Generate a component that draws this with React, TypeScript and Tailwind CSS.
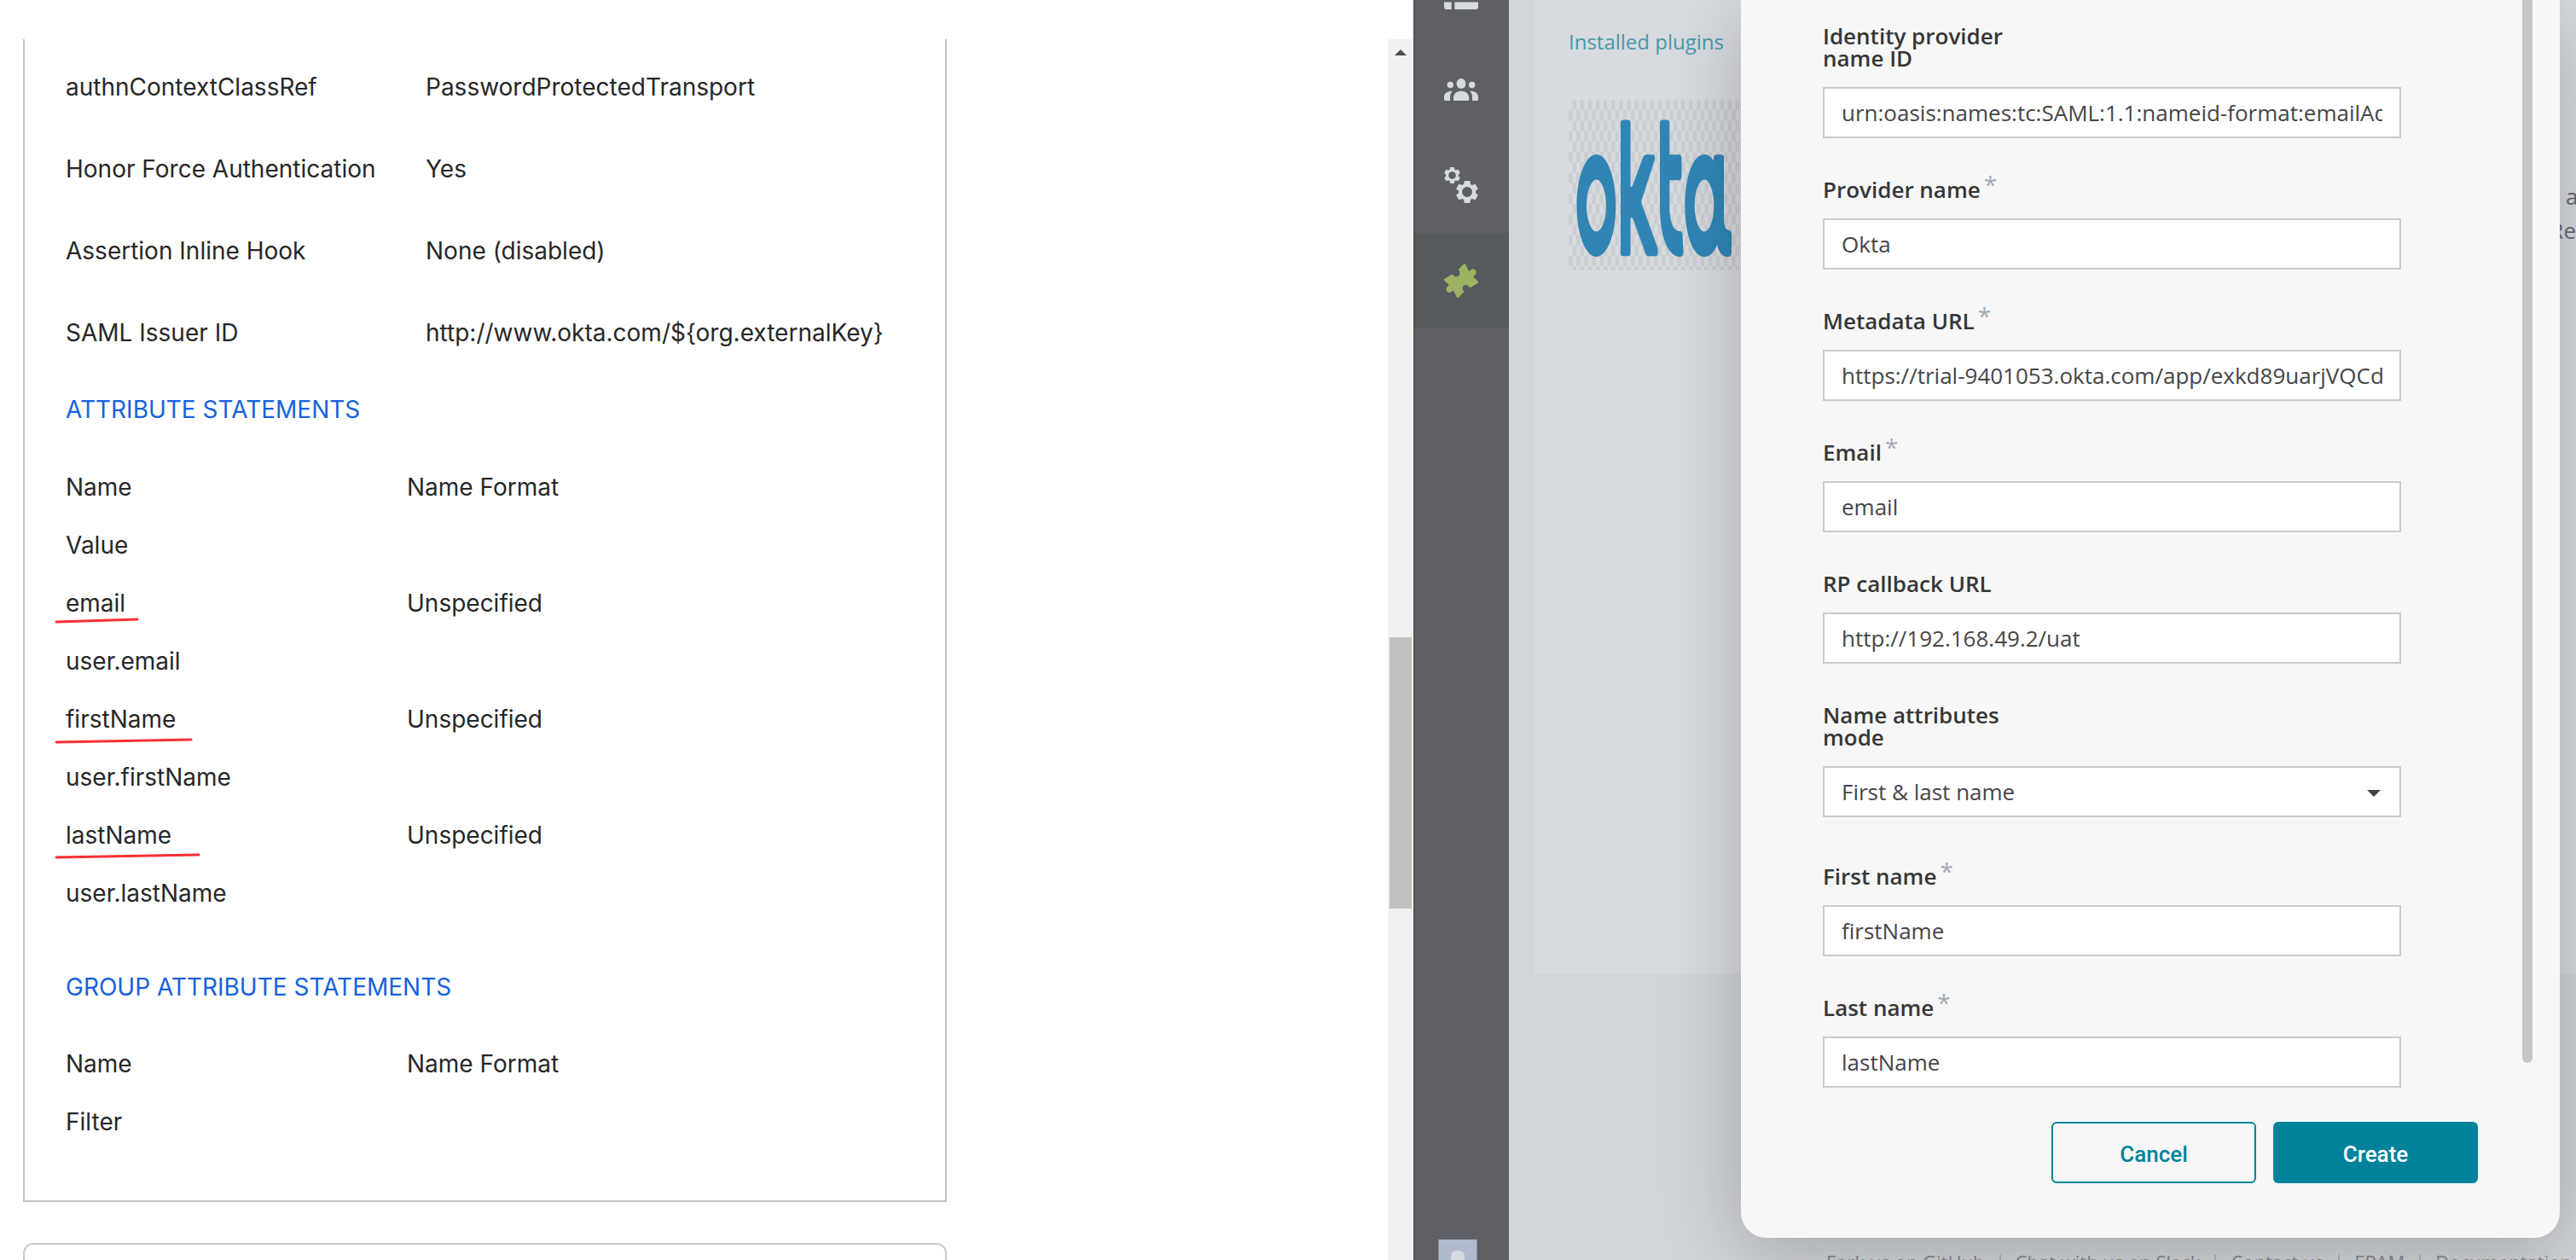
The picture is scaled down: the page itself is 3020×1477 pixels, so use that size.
import React from "react";

const pairs = [
  ["authnContextClassRef", "PasswordProtectedTransport"],
  ["Honor Force Authentication", "Yes"],
  ["Assertion Inline Hook", "None (disabled)"],
  ["SAML Issuer ID", "http://www.okta.com/${org.externalKey}"],
];

type Mark = { width: number; rise: number; top: string };

const attributes: { name: string; format: string; mark?: Mark }[] = [
  { name: "Name", format: "Name Format" },
  { name: "Value", format: "" },
  { name: "email", format: "Unspecified", mark: { width: 97, rise: 3, top: "top-[52px]" } },
  { name: "user.email", format: "" },
  { name: "firstName", format: "Unspecified", mark: { width: 160, rise: 3, top: "top-[57px]" } },
  { name: "user.firstName", format: "" },
  { name: "lastName", format: "Unspecified", mark: { width: 169, rise: 3, top: "top-[56px]" } },
  { name: "user.lastName", format: "" },
];

const groups = [
  { name: "Name", format: "Name Format" },
  { name: "Filter", format: "" },
];

function AttributeTable({ rows }: { rows: { name: string; format: string; mark?: Mark }[] }) {
  return (
    <table className="w-full table-fixed border-collapse text-left">
      <tbody>
        {rows.map((r) => (
          <tr key={r.name} className="h-[68px]">
            <td className="relative w-[400px] p-0">
              {r.name}
              {r.mark && (
                <svg
                  className={`absolute -left-3 overflow-visible ${r.mark.top}`}
                  width={r.mark.width}
                  height="6"
                  aria-hidden="true"
                >
                  <path
                    d={`M1 ${1 + r.mark.rise}L${r.mark.width - 1} 1`}
                    stroke="#fb2f35"
                    strokeWidth="3"
                    strokeLinecap="round"
                  />
                </svg>
              )}
            </td>
            <td className="p-0">{r.format}</td>
          </tr>
        ))}
      </tbody>
    </table>
  );
}

function SettingsPane() {
  return (
    <section className="flex min-w-0 flex-1 pt-[46px] text-[28px] leading-[34px] text-[#272727]">
      <div className="min-w-0 flex-1 pl-[27px]">
        <div className="max-w-[1083px] border-x-2 border-b-2 border-[#c1c1c8] px-12 pb-[58px]">
          <table className="w-full table-fixed border-collapse text-left">
            <tbody>
              {pairs.map(([k, v]) => (
                <tr key={k} className="h-24">
                  <td className="w-[422px] p-0 pt-4">{k}</td>
                  <td className="p-0 pt-4">{v}</td>
                </tr>
              ))}
            </tbody>
          </table>
          <h2 className="pt-[33px] pb-10 text-[#1662dd]">ATTRIBUTE STATEMENTS</h2>
          <AttributeTable rows={attributes} />
          <h2 className="pt-[59px] pb-[39px] text-[#1662dd]">GROUP ATTRIBUTE STATEMENTS</h2>
          <AttributeTable rows={groups} />
        </div>
        <div className="mt-12 h-10 max-w-[1083px] rounded-t-xl border-x-2 border-t-2 border-[#cbcbcb]" />
      </div>
      <div className="flex w-[30px] shrink-0 flex-col bg-[#f1f1f1] px-0.5 pt-3">
        <svg className="self-center" width="14" height="7" viewBox="0 0 14 7" aria-hidden="true">
          <path d="M7 0l7 7H0z" fill="#505050" />
        </svg>
        <div className="mt-[682px] h-[318px] bg-[#c1c1c1]" />
      </div>
    </section>
  );
}

const navItem = "flex h-28 w-full shrink-0 items-center justify-center";

function Gear({ cx, cy, r }: { cx: number; cy: number; r: number }) {
  return (
    <g transform={`translate(${cx} ${cy}) scale(${r / 10})`}>
      {[0, 60, 120, 180, 240, 300].map((a) => (
        <path key={a} d="M-3.200 -5.500L-2.600 -9.600Q-2.500 -10 -2 -10H2Q2.500 -10 2.600 -9.600L3.200 -5.500z" transform={`rotate(${a})`} />
      ))}
      <path
        fillRule="evenodd"
        d="M0-7.700A7.700 7.700 0 1 1 0 7.700A7.700 7.700 0 1 1 0-7.700zM0-4.600A4.600 4.600 0 1 0 0 4.600A4.600 4.600 0 1 0 0-4.600z"
      />
    </g>
  );
}

function Sidebar() {
  return (
    <nav className="flex w-28 shrink-0 flex-col items-center overflow-hidden bg-linear-to-r from-[#505359] from-[2px] to-[#5f6065] to-[2px] text-[#d7dadf]">
      <a href="#projects" aria-label="Projects" className="flex h-[49px] w-full shrink-0 justify-center">
        <svg width="40" height="11" viewBox="0 0 40 11" fill="currentColor">
          <path d="M0 2.500H8.700V11H3Q0 11 0 8zM12.300 2.500H40V8Q40 11 37 11H12.300z" />
        </svg>
      </a>
      <a href="#members" aria-label="Members" className={navItem}>
        <svg width="40" height="26" viewBox="0 0 40 26" fill="currentColor">
          <ellipse cx="20" cy="6" rx="5.400" ry="6" />
          <circle cx="7.300" cy="7.500" r="3.700" />
          <circle cx="32.700" cy="7.500" r="3.700" />
          <path d="M11 24.500V23C11 17.500 15 14.700 20 14.700S29.200 17.500 29.200 23V24.500Q29.200 26 27.700 26H12.500Q11 26 11 24.500zM0 24.500V21.500C0 17 4 14.700 9.500 14.700C7.700 17 7 19 7 22V26H1.500Q0 26 0 24.500zM40 24.500V21.500C40 17 36 14.700 30.500 14.700C32.300 17 33 19 33 22V26H38.500Q40 26 40 24.500z" />
        </svg>
      </a>
      <a href="#settings" aria-label="Settings" className={navItem}>
        <svg width="40" height="42" viewBox="0 0 40 42" fill="currentColor">
          <Gear cx={9.5} cy={9.5} r={9.5} />
          <Gear cx={27} cy={29} r={13} />
        </svg>
      </a>
      <a href="#plugins" aria-label="Plugins" className="flex h-28 w-full shrink-0 items-center justify-center bg-linear-to-r from-[#4b5055] from-[2px] to-[#56595d] to-[2px] text-[#9bb362]">
        <svg width="40" height="40" viewBox="0 0 40 40" fill="currentColor">
          <path d="M23 .5Q24.300-.5 25 .8L29 8.700C30.500 9 31 6 34.300 6.200C38 6.700 38.500 11 36.500 13.200C35.300 14.600 34 14.500 34.700 16L40 21Q40.500 22 39.500 23L31 28C29 28.500 29 25 25.500 24.700C22 25 20.500 28.500 22.500 31.500L23.700 33L17 39.500Q16 40.500 15 39.500L11 31.800C9.500 31.500 9 34 6 34C2.500 33.700 1.500 29.500 3.500 27.300C4.500 26 6 26 5.300 24.500L0 19.500Q-.5 18.500 .5 17.800L9.500 12.500C11 12.500 11 15.500 14.500 15.300C18 15 19.500 11.500 17.700 8.500L16.500 7.200z" />
        </svg>
      </a>
      <a href="#profile" aria-label="Profile" className="mt-auto mr-2 flex h-6 w-[46px] shrink-0 justify-center border-x border-[#8b909e] bg-[#b1b9cd] pt-[13px]">
        <span className="h-3 w-4 rounded-t-md bg-[#d7dadf]" />
      </a>
    </nav>
  );
}

function OktaLogo() {
  return (
    <svg width="200" height="200" viewBox="0 0 200 200" className="mt-[52px] block" role="img" aria-label="Okta">
      <defs>
        <pattern id="checks" width="9.100" height="24.400" patternUnits="userSpaceOnUse">
          <path d="M4.500 0H9.100V12.200H4.500zM0 12.200H4.500V24.400H0z" fill="#cbced1" />
        </pattern>
      </defs>
      <rect width="200" height="200" fill="url(#checks)" />
      <g fill="#3085b5">
        <path
          fillRule="evenodd"
          d="M32.500 64C45 64 55.300 90 55.300 124S45 184 32.500 184S9.500 158 9.500 124S20 64 32.500 64zM32.500 93.500C26.500 93.500 21 107 21 124S26.500 154.500 32.500 154.500S44 141 44 124S38.500 93.500 32.500 93.500z"
        />
        <path d="M61 27Q61 23.500 64 23.500H69Q72.500 23.500 72.500 27V99C72.500 103 74 103.500 75.500 99L87 68Q88.500 64.300 91 64.300H98.500Q101.500 64.300 101 70L85.800 117Q85 120 86 123L104.500 174Q105.500 183 102.500 183.300H93Q91 183.300 90 180L76 141C74.500 136.500 72.500 137 72.500 141V180Q72.500 183.300 69.500 183.300H64Q61 183.300 61 180z" />
        <path d="M107 27Q107 23.500 110 23.500H115Q118.300 23.500 118.300 27V64.300H130Q132.500 65 132.500 70V89Q132.500 94 130 94.300H118.300V125C118.300 144 123 154.500 131 154Q133.500 154.500 133.500 158L134.500 178Q134.500 184 130.500 184C116 184 107 159 107 126z" />
        <path
          fillRule="evenodd"
          d="M170 71.500V67Q170.500 64.300 173 64.300H179Q182 64.300 182 68V138C182 148 184 152.500 188 153Q191 153.500 191 157V178Q191 184 187 184C180 184.500 176 178 174 170C170 180 165 184 159 184C146 184 136.300 158 136.300 124S146 64 159 64C163 64 167 66.500 170 71.500zM159 93.500C153 93.500 147.700 107 147.700 124S153 154.500 159 154.500S170.400 141 170.400 124S165 93.500 159 93.500z"
        />
      </g>
    </svg>
  );
}

type FieldProps = { id: string; label: string; value: string; required?: boolean };

const inputClass =
  "block h-[60px] w-full appearance-none rounded-none border-2 border-[#cacaca] bg-white px-5 text-[26px] text-[#464547] outline-none";

function FieldLabel({ id, label, required }: { id: string; label: string; required?: boolean }) {
  return (
    <label htmlFor={id} className="mb-[21px] flex text-[26px] leading-[26px] font-semibold text-[#363636]">
      <span className="max-w-[230px]">{label}</span>
      {required && <span className="-mt-1.5 ml-1 text-[28px] font-medium text-[#a2aab5]">*</span>}
    </label>
  );
}

function Field({ id, label, value, required }: FieldProps) {
  return (
    <div>
      <FieldLabel id={id} label={label} required={required} />
      <input id={id} className={inputClass} defaultValue={value} required={required} />
    </div>
  );
}

function ProviderDialog() {
  return (
    <div
      role="dialog"
      aria-label="Okta integration"
      className="absolute top-0 right-[19px] left-[272px] rounded-b-[30px] bg-[#f7f7f7] pb-16 font-['Open_Sans',sans-serif] shadow-[0_18px_90px_rgba(0,0,0,0.22)]"
    >
      <div className="flex h-[1275px] justify-between overflow-hidden pr-8 pl-24">
        <form id="provider-form" className="flex w-[678px] flex-col gap-[47px] pt-[29px]">
          <Field id="nameid" label="Identity provider name ID" value="urn:oasis:names:tc:SAML:1.1:nameid-format:emailAddress" />
          <Field id="provider" label="Provider name" value="Okta" required />
          <Field id="metadata" label="Metadata URL" value="https://trial-9401053.okta.com/app/exkd89uarjVQCd5697/sso/saml/metadata" required />
          <Field id="email" label="Email" value="email" required />
          <Field id="callback" label="RP callback URL" value="http://192.168.49.2/uat" />
          <div className="mb-[9px]">
            <FieldLabel id="mode" label="Name attributes mode" />
            <div className="relative">
              <select id="mode" className={inputClass} defaultValue="both">
                <option value="both">First &amp; last name</option>
                <option value="full">Full name</option>
              </select>
              <svg className="pointer-events-none absolute top-[28px] right-6" width="16" height="8" viewBox="0 0 16 8" aria-hidden="true">
                <path d="M0 0h16L8 8z" fill="#464547" />
              </svg>
            </div>
          </div>
          <Field id="first" label="First name" value="firstName" required />
          <Field id="last" label="Last name" value="lastName" required />
        </form>
        <div className="h-[1246px] w-3 rounded-b-full bg-[#c6c6c6]" />
      </div>
      <div className="mt-10 mr-24 flex justify-end gap-5 font-[Roboto,sans-serif] text-[26px] font-medium">
        <button type="button" className="h-[72px] w-60 rounded-md border-2 border-[#00829b] pt-1 text-[#00829b]">
          Cancel
        </button>
        <button type="submit" form="provider-form" className="h-[72px] w-60 rounded-md bg-[#00829b] pt-1 text-white">
          Create
        </button>
      </div>
    </div>
  );
}

const footerLinks = ["Fork us on GitHub", "Chat with us on Slack", "Contact us", "EPAM", "Documentation"];

export default function App() {
  return (
    <div className="flex h-screen overflow-hidden bg-white font-[Inter,sans-serif]">
      <SettingsPane />
      <Sidebar />
      <main className="relative flex w-[1251px] shrink-0 flex-col overflow-hidden bg-[#d1d4d8] pl-[30px] font-['Open_Sans',sans-serif]">
        <div className="flex h-[1141px] shrink-0 justify-between bg-[#d7dadf] pl-10">
          <div className="pt-8">
            <h1 className="text-[24px] leading-[33px] text-[#459aa9]">Installed plugins</h1>
            <OktaLogo />
          </div>
          <p className="w-7 pt-[210px] text-right text-[26px] leading-10 whitespace-nowrap text-[#6a6b70]">
            <span className="block pl-4 text-left">a</span>
            <span className="flex justify-end">Re</span>
          </p>
        </div>
        <footer className="mt-auto -mb-3.5 ml-[342px] flex h-6 items-center gap-[17px] text-[22px] leading-6 whitespace-nowrap text-[#85878b]">
          {footerLinks.map((t, i) => (
            <React.Fragment key={t}>
              {i > 0 && <span className="mt-1 h-5 w-0.5 bg-[#b0b3b7]" />}
              <a href="#footer">{t}</a>
            </React.Fragment>
          ))}
        </footer>
        <ProviderDialog />
      </main>
    </div>
  );
}
